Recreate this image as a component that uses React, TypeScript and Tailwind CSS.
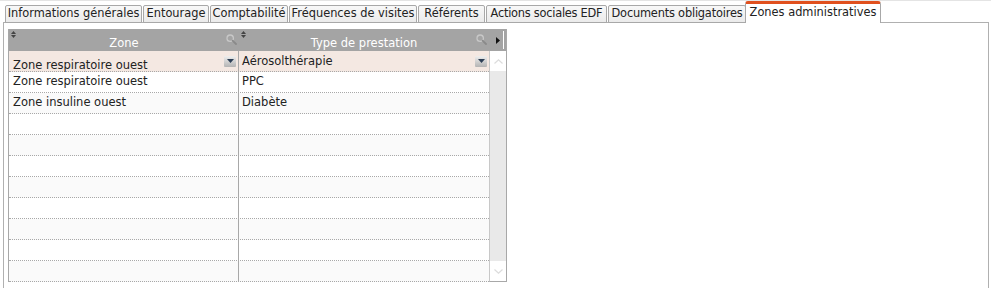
import React from "react";

const tabs: { t: string; w: string }[] = [
  { t: "Informations générales", w: "w-[137px]" },
  { t: "Entourage", w: "w-[66px]" },
  { t: "Comptabilité", w: "w-[78px]" },
  { t: "Fréquences de visites", w: "w-[128px]" },
  { t: "Référents", w: "w-[67px]" },
  { t: "Actions sociales EDF", w: "w-[121px] tracking-[-0.25px]" },
  { t: "Documents obligatoires", w: "w-[138px] tracking-[-0.2px]" },
];

const rows: [string, string][] = [
  ["Zone respiratoire ouest", "Aérosolthérapie"],
  ["Zone respiratoire ouest", "PPC"],
  ["Zone insuline ouest", "Diabète"],
  ["", ""],
  ["", ""],
  ["", ""],
  ["", ""],
  ["", ""],
  ["", ""],
  ["", ""],
  ["", ""],
];

function SortIcon() {
  return (
    <svg width="5" height="7" viewBox="0 0 5 7" className="absolute left-[2px] top-[2px]">
      <path d="M2.5 0 L5 3 L0 3 Z" fill="#444" />
      <path d="M0 4 L5 4 L2.5 7 Z" fill="#444" />
    </svg>
  );
}

function Magnifier() {
  return (
    <svg width="11" height="11" viewBox="0 0 11 11">
      <circle cx="4.2" cy="4.2" r="3.2" fill="none" stroke="#c8c8c8" strokeWidth="1.3" />
      <path d="M6.6 6.6 L10 10" stroke="#8a8a8a" strokeWidth="1.8" strokeLinecap="round" />
    </svg>
  );
}

function DropBtn() {
  return (
    <div className="w-[12px] h-[11px] flex items-center justify-center bg-gradient-to-b from-[#eeeeee] to-[#b4b4b4] rounded-[1px]">
      <svg width="7" height="4" viewBox="0 0 7 4">
        <path d="M0 0 L7 0 L3.5 4 Z" fill="#2c3e55" />
      </svg>
    </div>
  );
}

export default function App() {
  return (
    <div
      className="w-[991px] h-[288px] bg-white overflow-hidden text-[#222]"
      style={{ fontFamily: '"DejaVu Sans", Verdana, sans-serif' }}
    >
      <div className="h-[1px] bg-[#e4e4e4]" />
      {/* Tabs */}
      <div className="relative z-10 flex items-end gap-[1px] pl-[5px] h-[22px] -mb-[1px]">
        {tabs.map((t) => (
          <div
            key={t.t}
            className={`h-[18px] ${t.w} flex items-center justify-center text-[11.4px] leading-none border border-[#a8a8a8] bg-gradient-to-b from-[#f8f8f8] to-[#ebebeb] rounded-t-[2px] whitespace-nowrap`}
          >
            {t.t}
          </div>
        ))}
        <div className="h-[22px] w-[136px] -ml-[2px] flex items-center justify-center text-[11.4px] leading-none bg-white border-x border-[#a8a8a8] border-t-[3px] border-t-[#e0501e] rounded-t-[3px] whitespace-nowrap pb-[1px]">
          Zones administratives
        </div>
      </div>
      {/* Panel */}
      <div className="ml-[3px] w-[986px] h-[300px] border border-[#b0b0b0] bg-white pt-[6px] pl-[4px]">
        {/* Grid */}
        <div className="w-[499px] border-l border-r border-[#a8a8a8]">
          {/* Header */}
          <div className="flex h-[22px] bg-[#a4a4a4] text-white text-[11.5px]">
            <div className="relative w-[230px] flex items-center justify-center pt-[7px]">
              <SortIcon />
              <span>Zone</span>
              <div className="absolute right-[2px] top-[5px]">
                <Magnifier />
              </div>
            </div>
            <div className="relative w-[250px] flex items-center justify-center pt-[7px]">
              <SortIcon />
              <span>Type de prestation</span>
              <div className="absolute right-[2px] top-[5px]">
                <Magnifier />
              </div>
            </div>
            <div className="relative flex-1 flex items-center">
              <svg width="4" height="7" viewBox="0 0 4 7" className="ml-[7px]">
                <path d="M0 0 L4 3.5 L0 7 Z" fill="#111" />
              </svg>
              <div className="absolute right-[2px] top-[2px] bottom-[2px] w-[1px] bg-white" />
            </div>
          </div>
          {/* Body */}
          <div className="flex">
            <div className="w-[480px]">
              {rows.map((r, i) => {
                const sel = i === 0;
                const bg = sel ? "bg-[#f4e8e2]" : i % 2 === 0 ? "bg-[#fafafa]" : "bg-white";
                return (
                  <div
                    key={i}
                    className={`flex h-[21px] border-b border-dotted border-[#a8a8a8] text-[11.5px] ${bg}`}
                  >
                    <div className="w-[230px] border-r border-[#a8a8a8] flex items-center pl-[4px] pr-[2px]">
                      <span className={`flex-1 whitespace-nowrap ${sel ? "pt-[10px]" : ""}`}>{r[0]}</span>
                      {sel && <DropBtn />}
                    </div>
                    <div className="w-[250px] flex items-center pl-[3px] pr-[2px]">
                      <span className={`flex-1 whitespace-nowrap ${sel ? "pt-[2px]" : ""}`}>{r[1]}</span>
                      {sel && <DropBtn />}
                    </div>
                  </div>
                );
              })}
            </div>
            {/* Scrollbar */}
            <div className="flex-1 flex flex-col bg-[#e9e9e9] border-l border-[#c8c8c8] border-b border-b-[#a8a8a8]">
              <div className="h-[20px] bg-white flex items-center justify-center">
                <svg width="9" height="5" viewBox="0 0 9 5">
                  <path d="M0.5 4.5 L4.5 0.8 L8.5 4.5" fill="none" stroke="#dcdcdc" strokeWidth="1.2" />
                </svg>
              </div>
              <div className="flex-1" />
              <div className="h-[20px] bg-white flex items-center justify-center">
                <svg width="9" height="5" viewBox="0 0 9 5">
                  <path d="M0.5 0.5 L4.5 4.2 L8.5 0.5" fill="none" stroke="#dcdcdc" strokeWidth="1.2" />
                </svg>
              </div>
            </div>
          </div>
        </div>
      </div>
    </div>
  );
}
